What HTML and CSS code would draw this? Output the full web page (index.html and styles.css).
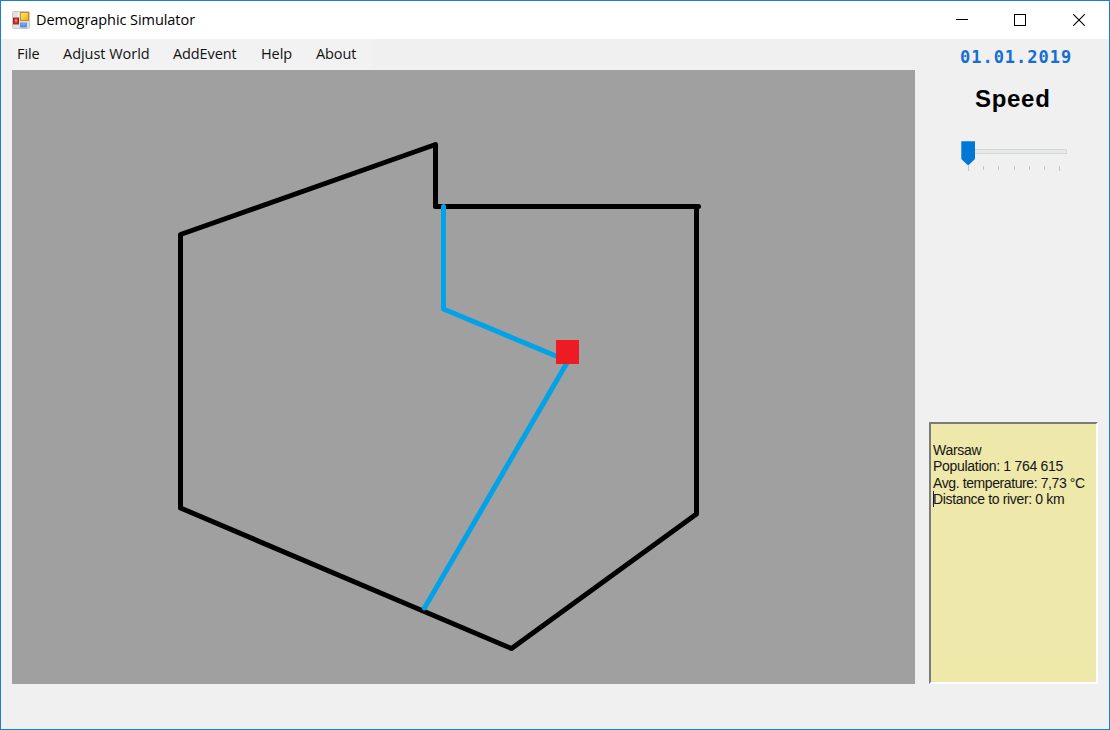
FILE: index.html
```html
<!DOCTYPE html>
<html lang="en">
<head>
<meta charset="utf-8">
<title>Demographic Simulator</title>
<link rel="stylesheet" href="styles.css">
</head>
<body>
<div class="window">
  <header class="titlebar">
    <svg class="app-icon" width="18" height="18" viewBox="0 0 18 18">
      <defs>
        <linearGradient id="gold" x1="0" y1="0" x2="1" y2="1"><stop offset="0" stop-color="#ffe68a"/><stop offset="1" stop-color="#eeb000"/></linearGradient>
        <linearGradient id="blue" x1="0" y1="0" x2="0" y2="1"><stop offset="0" stop-color="#8dbcff"/><stop offset="1" stop-color="#3f7fe0"/></linearGradient>
      </defs>
      <rect x=".5" y=".5" width="17" height="17" rx="1" fill="#e0e0e0" stroke="#c9c9c9"/>
      <path d="M1 6.500h6M6.500 1v5M1 13.500h6M12 11v1" stroke="#f4f4f4"/>
      <rect x="1.500" y="7" width="5" height="6" fill="#cf3434" stroke="#a51c1c"/>
      <rect x="3" y="8.500" width="2" height="2" fill="#f08a80"/>
      <rect x="8.500" y="1.500" width="8" height="8" fill="url(#gold)" stroke="#c58b13"/>
      <rect x="8.500" y="12" width="6" height="4" fill="url(#blue)" stroke="#5c92df"/>
    </svg>
    <h1 class="title">Demographic Simulator</h1>
    <div class="controls">
      <svg width="12" height="12" shape-rendering="crispEdges"><path d="M0 5.500h12" stroke="#000"/></svg>
      <svg width="12" height="12" shape-rendering="crispEdges"><rect x=".5" y=".5" width="11" height="11" fill="none" stroke="#000"/></svg>
      <svg class="close" width="12" height="12"><path d="M.3.3l11.400 11.400M11.700.3L.3 11.700" stroke="#000" stroke-width="1.1"/></svg>
    </div>
  </header>
  <div class="body">
    <main class="main">
      <nav class="menu">
        <span class="item file">File</span>
        <span class="item adjust">Adjust World</span>
        <span class="item event">AddEvent</span>
        <span class="item help">Help</span>
        <span class="item about">About</span>
      </nav>
      <svg class="map" width="903" height="614" viewBox="12 70 903 614">
        <path class="border" d="M435.500 144.500V206.500H698.500M696.500 206.500V514L511.500 648.500L180.500 508V234.500L435.500 144.500"/>
        <path class="river" d="M443.500 206.500V309L568 361L424.500 608"/>
        <rect x="556" y="340" width="23" height="24" fill="#ed1c24"/>
      </svg>
    </main>
    <aside class="side">
      <div class="date">01.01.2019</div>
      <h2 class="speed">Speed</h2>
      <svg class="slider" width="110" height="34" viewBox="959 139 110 34">
        <rect x="962.500" y="149.500" width="104" height="4" fill="#e7eaea" stroke="#d6d6d6"/>
        <path d="M968.500 166v5M1059.500 166v5M983.500 166v4M998.500 166v4M1014.500 166v4M1029.500 166v4M1044.500 166v4" stroke="#c6c6c6"/>
        <path d="M961.300 141.300h13.700v17.700l-6.850 6.500l-6.850-6.500z" fill="#0078d7"/>
      </svg>
      <div class="info">
        <div class="line warsaw">Warsaw</div>
        <div class="line population">Population: 1 764 615</div>
        <div class="line temperature">Avg. temperature: 7,73 °C</div>
        <div class="line distance">Distance to river: 0 km</div>
      </div>
    </aside>
  </div>
</div>
</body>
</html>
```
FILE: styles.css
```css
* { box-sizing: border-box; }
body { margin: 0; }
.window {
  width: 1110px;
  height: 730px;
  border: 1px solid #1b7fcd;
  background: #f0f0f0;
  display: flex;
  flex-direction: column;
  color: #000;
}
.titlebar {
  height: 38px;
  background: #fff;
  display: flex;
  align-items: center;
  padding: 0 24px 0 11px;
}
.app-icon { flex: none; }
.title {
  margin: 0 0 0 6px;
  font: 400 14.500px/20px "Open Sans", sans-serif;
  letter-spacing: -.06px;
  white-space: nowrap;
}
.controls { margin-left: auto; display: flex; gap: 46px; }
.controls svg { display: block; }
.controls .close { margin-left: 1px; }
.body { flex: 1; display: flex; padding-left: 11px; }
.main { width: 903px; }
.menu {
  width: 360px;
  height: 31px;
  background: #f2f2f2;
  display: flex;
  padding-left: 5px;
}
.item {
  font: 400 14.500px/30px "Open Sans", sans-serif;
  letter-spacing: -.1px;
  white-space: nowrap;
  color: #111;
  flex: none;
}
.file { width: 46px; }
.adjust { width: 110px; letter-spacing: -.03px; }
.event { width: 88px; }
.help { width: 55px; }
.map { display: block; background: #a0a0a0; }
.border, .river { fill: none; stroke-width: 5; stroke-linecap: round; stroke-linejoin: round; }
.border { stroke: #000; }
.river { stroke: #00a2e8; }
.side { width: 169px; margin-left: 14px; }
.date {
  margin: 8px 0 0 31px;
  font: 700 17px/20px "DejaVu Sans Mono", monospace;
  letter-spacing: .98px;
  color: #146fd1;
}
.speed {
  margin: 18px 0 0 46px;
  font: 700 24px/28px "Liberation Sans", sans-serif;
  letter-spacing: .7px;
}
.slider { display: block; margin: 26px 0 0 30px; }
.info {
  height: 262px;
  margin-top: 249px;
  padding: 18px 0 0 2px;
  background: #eee8aa;
  border: 2px solid;
  border-color: #7b7b7b #fff #fff #7b7b7b;
}
.line {
  font: 400 14px/16.300px "Liberation Sans", sans-serif;
  letter-spacing: -.3px;
  white-space: nowrap;
  color: #151515;
}
.temperature { letter-spacing: -.4px; }
.distance { position: relative; letter-spacing: -.35px; }
.distance::before {
  content: "";
  position: absolute;
  left: 0;
  top: 0;
  width: 1px;
  height: 16px;
  background: #14146a;
}
```
